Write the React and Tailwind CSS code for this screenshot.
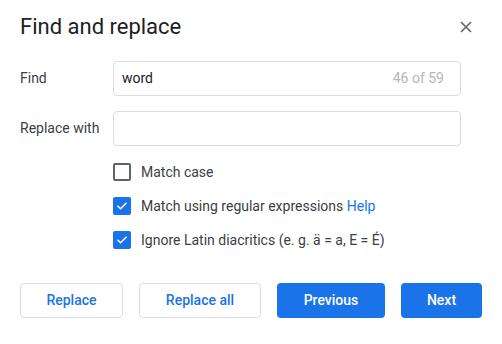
import React, { useState } from "react";

const Checkbox = ({ checked, onChange, children }) => (
  <label className="flex items-center h-[34px] cursor-pointer">
    <span
      onClick={onChange}
      className={`${
        checked ? "bg-[#1a73e8] border-[#1a73e8]" : "bg-white border-[#5f6368]"
      } w-[18px] h-[18px] border-2 rounded-[2px] flex items-center justify-center`}
    >
      {checked && (
        <svg width="12" height="12" viewBox="0 0 24 24" fill="none">
          <path
            d="M4 12.5l5 5L20 6.5"
            stroke="white"
            strokeWidth="3"
            strokeLinecap="square"
          />
        </svg>
      )}
    </span>
    <span className="ml-[10px] text-[14px] text-[#3c4043]">{children}</span>
  </label>
);

const App = () => {
  const [matchCase, setMatchCase] = useState(false);
  const [regex, setRegex] = useState(true);
  const [diacritics, setDiacritics] = useState(true);

  return (
    <div
      className="w-[502px] h-[344px] bg-white px-5 overflow-hidden"
      style={{ fontFamily: "Roboto, 'Liberation Sans', sans-serif" }}
    >
      <div className="flex items-center justify-between pt-[13px]">
        <h1 className="text-[22px] leading-7 text-[#202124]">Find and replace</h1>
        <button className="mr-[10px] text-[#5f6368]">
          <svg width="12" height="12" viewBox="0 0 12 12">
            <path d="M1 1l10 10M11 1L1 11" stroke="#5f6368" strokeWidth="1.5" />
          </svg>
        </button>
      </div>

      <div className="flex items-center mt-[20px]">
        <span className="w-[93px] text-[14px] text-[#3c4043]">Find</span>
        <div className="w-[348px] h-[35px] border border-[#dadce0] rounded flex items-center justify-between pl-2 pr-4">
          <span className="text-[14px] text-[#202124]">word</span>
          <span className="text-[14px] text-[#b7b7b7]">46 of 59</span>
        </div>
      </div>

      <div className="flex items-center mt-[15px]">
        <span className="w-[93px] text-[14px] text-[#3c4043]">Replace with</span>
        <input className="w-[348px] h-[35px] border border-[#dadce0] rounded px-2 text-[14px] outline-none" />
      </div>

      <div className="ml-[93px] mt-[9px]">
        <Checkbox checked={matchCase} onChange={() => setMatchCase(!matchCase)}>
          Match case
        </Checkbox>
        <Checkbox checked={regex} onChange={() => setRegex(!regex)}>
          Match using regular expressions{" "}
          <a className="text-[#1a73e8]">Help</a>
        </Checkbox>
        <Checkbox checked={diacritics} onChange={() => setDiacritics(!diacritics)}>
          Ignore Latin diacritics (e. g. ä = a, E = É)
        </Checkbox>
      </div>

      <div className="flex gap-4 mt-[26px]">
        <button className="w-[103px] h-[35px] border border-[#dadce0] rounded text-[14px] font-medium text-[#1a73e8]">
          Replace
        </button>
        <button className="w-[122px] h-[35px] border border-[#dadce0] rounded text-[14px] font-medium text-[#1a73e8]">
          Replace all
        </button>
        <button className="w-[108px] h-[35px] bg-[#1a73e8] rounded text-[14px] font-medium text-white">
          Previous
        </button>
        <button className="w-[81px] h-[35px] bg-[#1a73e8] rounded text-[14px] font-medium text-white">
          Next
        </button>
      </div>
    </div>
  );
};

export default App;
